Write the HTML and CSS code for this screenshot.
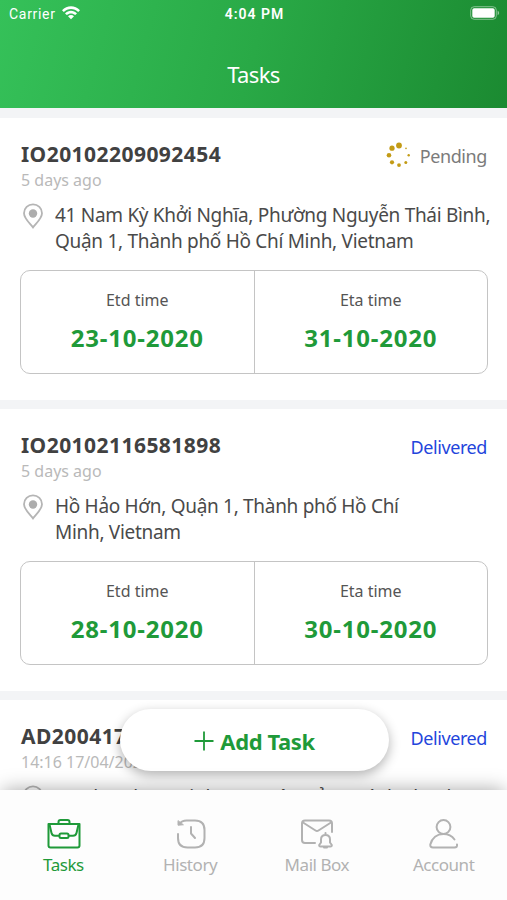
FILE: index.html
```html
<!DOCTYPE html>
<html lang="vi">
<head>
    <meta charset="UTF-8">
    <meta name="viewport" content="width=device-width, initial-scale=1.0">
    <title>Tasks</title>
    <link rel="stylesheet" href="styles.css">
</head>
<body>
    <div class="app">
        <header class="header">
            <div class="status-bar">
                <div class="carrier">
                    <span>Carrier</span>
                    <svg class="wifi" width="18" height="14" viewBox="0 0 18 14">
                        <path d="M0 4.3C5-1.1 13-1.1 18 4.3L16.2 6.1C12.2 2 5.8 2 1.8 6.1Z" fill="#fff"/>
                        <path d="M3 7.4C6.4 4 11.6 4 15 7.4L13.2 9.1C10.8 6.8 7.2 6.8 4.8 9.1Z" fill="#fff"/>
                        <path d="M6 10.3C7.7 8.7 10.3 8.7 12 10.3L9 13.3Z" fill="#fff"/>
                    </svg>
                </div>
                <div class="clock">4:04 PM</div>
                <svg class="battery" width="30" height="14" viewBox="0 0 30 14">
                    <rect x=".7" y=".7" width="25.6" height="12.6" rx="3.5" fill="none" stroke="#fff" stroke-opacity=".45"/>
                    <rect x="2.3" y="2.3" width="22.4" height="9.4" rx="1.8" fill="#fff"/>
                    <path d="M27.6 4.8c2 .7 2 3.7 0 4.4z" fill="#fff" fill-opacity=".5"/>
                </svg>
            </div>
            <h1 class="page-title">Tasks</h1>
        </header>

        <main class="task-list">
            <section class="task">
                <div class="task-top">
                    <h2 class="task-id">IO20102209092454</h2>
                    <div class="status pending">
                        <svg width="24" height="26" viewBox="0 0 24 26" fill="#c39b16">
                            <circle cx="13" cy="3.5" r="2.9"/>
                            <circle cx="6" cy="6.2" r="2.6"/>
                            <circle cx="3" cy="13.3" r="2.3"/>
                            <circle cx="6" cy="20.3" r="2.1"/>
                            <circle cx="13" cy="23.1" r="1.9"/>
                            <circle cx="19.8" cy="20.4" r="1.5"/>
                            <circle cx="22.7" cy="13.3" r="1.2"/>
                            <circle cx="20" cy="6.4" r=".8"/>
                        </svg>
                        <span>Pending</span>
                    </div>
                </div>
                <p class="task-date">5 days ago</p>
                <div class="address">
                    <svg class="pin" width="22" height="26" viewBox="0 0 22 26">
                        <path d="M11 24.4C8.2 20.7 2 15.4 2 10.2A9 8.8 0 0 1 20 10.2C20 15.4 13.8 20.7 11 24.4Z" fill="none" stroke="#b5b5b5" stroke-width="1.8"/>
                        <circle cx="11" cy="10.5" r="4.2" fill="#adadad"/>
                    </svg>
                    <p>41 Nam Kỳ Khởi Nghĩa, Phường Nguyễn Thái Bình,<br>Quận 1, Thành phố Hồ Chí Minh, Vietnam</p>
                </div>
                <div class="times">
                    <div class="time">
                        <span class="time-label">Etd time</span>
                        <span class="time-value">23-10-2020</span>
                    </div>
                    <div class="time">
                        <span class="time-label">Eta time</span>
                        <span class="time-value">31-10-2020</span>
                    </div>
                </div>
            </section>

            <section class="task">
                <div class="task-top">
                    <h2 class="task-id">IO20102116581898</h2>
                    <div class="status delivered">Delivered</div>
                </div>
                <p class="task-date">5 days ago</p>
                <div class="address">
                    <svg class="pin" width="22" height="26" viewBox="0 0 22 26">
                        <path d="M11 24.4C8.2 20.7 2 15.4 2 10.2A9 8.8 0 0 1 20 10.2C20 15.4 13.8 20.7 11 24.4Z" fill="none" stroke="#b5b5b5" stroke-width="1.8"/>
                        <circle cx="11" cy="10.5" r="4.2" fill="#adadad"/>
                    </svg>
                    <p>Hồ Hảo Hớn, Quận 1, Thành phố Hồ Chí<br>Minh, Vietnam</p>
                </div>
                <div class="times">
                    <div class="time">
                        <span class="time-label">Etd time</span>
                        <span class="time-value">28-10-2020</span>
                    </div>
                    <div class="time">
                        <span class="time-label">Eta time</span>
                        <span class="time-value">30-10-2020</span>
                    </div>
                </div>
            </section>

            <section class="task">
                <div class="task-top">
                    <h2 class="task-id">AD200417</h2>
                    <div class="status delivered">Delivered</div>
                </div>
                <p class="task-date">14:16 17/04/2020</p>
                <div class="address">
                    <svg class="pin" width="22" height="26" viewBox="0 0 22 26">
                        <path d="M11 24.4C8.2 20.7 2 15.4 2 10.2A9 8.8 0 0 1 20 10.2C20 15.4 13.8 20.7 11 24.4Z" fill="none" stroke="#b5b5b5" stroke-width="1.8"/>
                        <circle cx="11" cy="10.5" r="4.2" fill="#adadad"/>
                    </svg>
                    <p>Landmark 81, Vinhomes Tân Cảng, Bình Thạnh</p>
                </div>
            </section>
        </main>

        <button class="add-task" type="button">
            <svg width="20" height="20" viewBox="0 0 20 20">
                <path d="M10 .5v19M.5 10h19" stroke="#1f9a39" stroke-width="1.8"/>
            </svg>
            <span>Add Task</span>
        </button>

        <nav class="tab-bar">
            <a class="tab active">
                <svg width="34" height="30" viewBox="0 0 34 30" fill="none" stroke="currentColor" stroke-width="2" stroke-linejoin="round" stroke-linecap="round">
                    <path d="M1.500 5H32.500V26.500Q32.500 28.500 30.500 28.500H3.500Q1.500 28.500 1.500 26.500Z"/>
                    <path d="M11.500 4.500V3Q11.500 1 13.500 1H20.500Q22.500 1 22.500 3V4.500"/>
                    <path d="M2.500 5.500L4.500 14Q5.200 16.800 8 16.800H12M31.500 5.500L29.500 14Q28.800 16.800 26 16.800H22"/>
                    <rect x="12.500" y="14.500" width="9" height="4.500" rx="1.500"/>
                </svg>
                <span>Tasks</span>
            </a>
            <a class="tab">
                <svg width="34" height="30" viewBox="0 0 34 30" fill="none" stroke="currentColor" stroke-width="2" stroke-linejoin="round" stroke-linecap="round">
                    <path d="M5 15V19Q5 28.500 14.500 28.500H22Q31.500 28.500 31.500 19V11Q31.500 1.500 22 1.500H13.500Q9 1.500 6 5"/>
                    <path d="M5 2V6.200L10 5.800Z" fill="currentColor" stroke-width="1"/>
                    <path d="M18 8V14.500L22 19"/>
                </svg>
                <span>History</span>
            </a>
            <a class="tab">
                <svg width="34" height="30" viewBox="0 0 34 30" fill="none" stroke="currentColor" stroke-width="2" stroke-linejoin="round" stroke-linecap="round">
                    <path d="M15 24H5Q2 24 2 21V4.500Q2 1.500 5 1.500H29Q32 1.500 32 4.500V13"/>
                    <path d="M3 3.500L15.500 11.500Q17 12.500 18.500 11.500L31 3.500"/>
                    <path d="M25.500 14V16C22.500 16 21 18 21 20.500V23.500L19.200 26Q19 27.500 20.500 27.500H30.500Q32 27.500 31.800 26L30 23.500V20.500C30 18 28.500 16 25.500 16M24 28.500H27"/>
                </svg>
                <span>Mail Box</span>
            </a>
            <a class="tab">
                <svg width="34" height="30" viewBox="0 0 34 30" fill="none" stroke="currentColor" stroke-width="2" stroke-linejoin="round" stroke-linecap="round">
                    <circle cx="16.500" cy="8" r="6.900"/>
                    <path d="M30 25.500Q30.500 28.500 27.500 28.500H6Q3 28.500 3.300 25.500C5 19 10 15 16.500 15C21 15 25 17 27.500 20.500"/>
                </svg>
                <span>Account</span>
            </a>
        </nav>
    </div>
</body>
</html>
```

FILE: styles.css
```css
* {
    box-sizing: border-box;
}

body {
    margin: 0;
    font-family: "Noto Sans", "Open Sans", sans-serif;
    color: #414141;
}

h1, h2, p {
    margin: 0;
    font-weight: normal;
}

svg {
    display: block;
    flex: none;
}

.app {
    position: relative;
    display: flex;
    flex-direction: column;
    height: 900px;
    overflow: hidden;
    background: #f3f4f6;
}

.header {
    flex: none;
    height: 108px;
    color: #fff;
    background: linear-gradient(105deg, #35c159 0%, #29a946 50%, #1b8a31 100%);
}

.status-bar {
    display: grid;
    grid-template-columns: 1fr auto 1fr;
    align-items: center;
    height: 28px;
    padding: 0 7px 0 9px;
    font-family: Roboto, sans-serif;
    font-size: 14px;
    letter-spacing: 0.7px;
}

.carrier {
    display: flex;
    align-items: center;
    gap: 6px;
}

.wifi {
    margin-top: -2px;
}

.clock {
    font-weight: 600;
    letter-spacing: 1px;
}

.battery {
    justify-self: end;
    margin-top: -2px;
}

.page-title {
    margin-top: 28px;
    font-size: 22px;
    line-height: 36px;
    letter-spacing: -0.6px;
    text-align: center;
}

.task-list {
    flex: 1;
    min-height: 0;
    padding-top: 10px;
    overflow: hidden;
}

.task {
    height: 282px;
    margin-bottom: 9px;
    padding: 21px 20px 0 21px;
    background: #fff;
}

.task-top {
    display: flex;
    justify-content: space-between;
    height: 30px;
}

.task-id {
    font-size: 21px;
    font-weight: bold;
    line-height: 30px;
    letter-spacing: 0.45px;
}

.status {
    display: flex;
    align-items: center;
    gap: 10px;
    font-size: 18px;
    line-height: 34px;
    height: 34px;
    letter-spacing: -0.4px;
}

.pending {
    color: #7b7b7b;
}

.pending svg {
    margin-top: -3px;
}

.delivered {
    color: #2345dc;
}

.task-date {
    font-size: 16px;
    line-height: 22px;
    color: #b9b9b9;
}

.address {
    display: flex;
    gap: 11px;
    margin-top: 11px;
    padding-left: 1px;
    font-size: 19px;
    line-height: 26px;
    letter-spacing: -0.3px;
    color: #4a4a4a;
    white-space: nowrap;
}

.pin {
    margin-top: 1px;
}

.times {
    display: flex;
    height: 104px;
    margin: 16px -1px 0;
    border: 1.500px solid #c4c4c4;
    border-radius: 10px;
}

.time {
    flex: 1;
    display: flex;
    flex-direction: column;
    align-items: center;
    padding-top: 17px;
}

.time + .time {
    border-left: 1px solid #c4c4c4;
}

.time-label {
    font-size: 16px;
    line-height: 24px;
    color: #555;
}

.time-value {
    margin-top: 10px;
    font-size: 24px;
    font-weight: bold;
    line-height: 32px;
    letter-spacing: 0.8px;
    color: #1f9a39;
}

.add-task {
    position: absolute;
    top: 709px;
    left: 120px;
    display: flex;
    align-items: center;
    justify-content: center;
    gap: 6px;
    width: 269px;
    height: 62px;
    padding: 1px 0 0;
    border: none;
    border-radius: 31px;
    background: #fff;
    box-shadow: 0 4px 12px rgba(0, 0, 0, 0.3);
    font-family: inherit;
    font-size: 22px;
    font-weight: bold;
    letter-spacing: -0.4px;
    color: #1f9a39;
}

.tab-bar {
    position: relative;
    flex: none;
    display: flex;
    height: 110px;
    background: #fdfdfd;
    box-shadow: 0 -3px 18px -3px rgba(0, 0, 0, 0.35);
}

.tab {
    flex: 1;
    display: flex;
    flex-direction: column;
    align-items: center;
    padding-top: 29px;
    font-size: 17px;
    line-height: 24px;
    letter-spacing: -0.45px;
    color: #b2b2b2;
}

.tab span {
    margin-top: 4px;
}

.active {
    color: #1f9a39;
}

.active svg {
    margin-left: 1px;
}
```
